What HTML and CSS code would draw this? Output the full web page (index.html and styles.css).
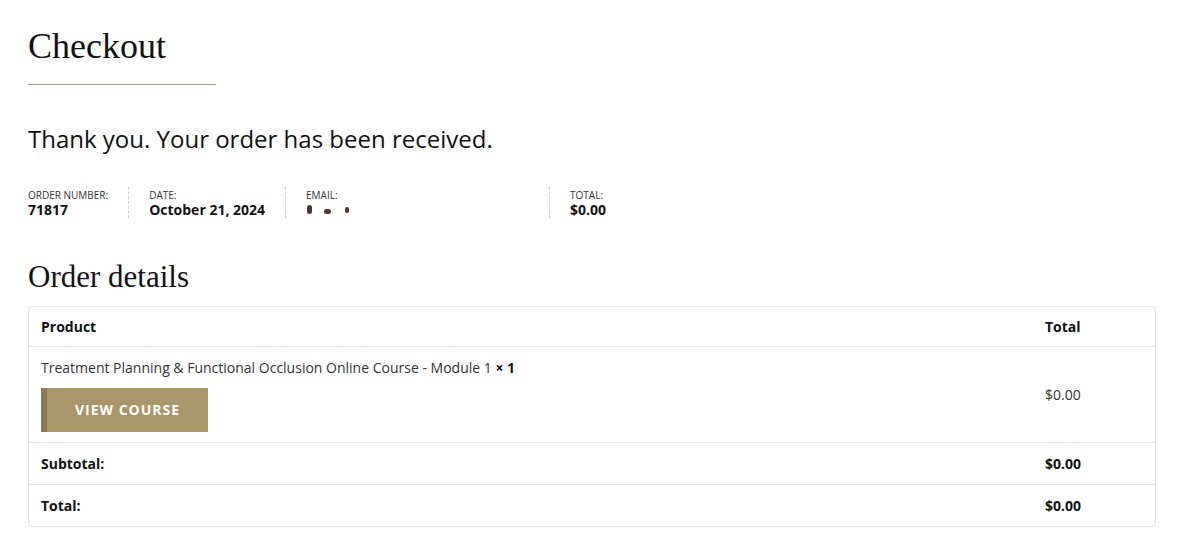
FILE: index.html
```html
<!DOCTYPE html>
<html lang="en">
<head>
<meta charset="utf-8">
<title>Checkout</title>
<link rel="stylesheet" href="styles.css">
</head>
<body>
<main class="page">
  <h1 class="page-title">Checkout</h1>
  <p class="thanks">Thank you. Your order has been received.</p>
  <ul class="overview">
    <li class="ov-item">
      <span class="ov-label">Order number:</span>
      <strong class="ov-value">71817</strong>
    </li>
    <li class="ov-item">
      <span class="ov-label">Date:</span>
      <strong class="ov-value">October 21, 2024</strong>
    </li>
    <li class="ov-item ov-email">
      <span class="ov-label">Email:</span>
      <span class="blurred"><i class="blob b1"></i><i class="blob b2"></i><i class="blob b3"></i></span>
    </li>
    <li class="ov-item ov-last">
      <span class="ov-label">Total:</span>
      <strong class="ov-value">$0.00</strong>
    </li>
  </ul>
  <h2 class="section-title">Order details</h2>
  <table class="order-table">
    <thead>
      <tr><th class="col-product">Product</th><th class="col-total">Total</th></tr>
    </thead>
    <tbody>
      <tr class="item-row">
        <td class="col-product">
          <div class="item-name">Treatment Planning &amp; Functional Occlusion Online Course - Module 1 <strong class="qty">× 1</strong></div>
          <a class="btn" href="#">View course</a>
        </td>
        <td class="col-total price">$0.00</td>
      </tr>
    </tbody>
    <tfoot>
      <tr><th class="col-product">Subtotal:</th><td class="col-total strong">$0.00</td></tr>
      <tr><th class="col-product">Total:</th><td class="col-total strong">$0.00</td></tr>
    </tfoot>
  </table>
</main>
</body>
</html>
```
FILE: styles.css
```css
* { box-sizing: border-box; }
html, body { margin: 0; padding: 0; background: #fff; }
body {
  font-family: "Open Sans", "Liberation Sans", sans-serif;
  color: #222;
}
.page { padding: 25px 29px 0 28px; }

.page-title {
  font-family: "Liberation Serif", "Times New Roman", serif;
  font-weight: 400;
  font-size: 36px;
  line-height: 43px;
  color: #111;
  margin: 0;
  padding-bottom: 16px;
  width: 188px;
  border-bottom: 1px solid #aa9c7a;
}

.thanks {
  font-size: 24px;
  line-height: 33px;
  margin: 37px 0 0;
  color: #111;
}

.overview {
  list-style: none;
  margin: 32px 0 0;
  padding: 0;
  display: flex;
}
.ov-item {
  display: flex;
  flex-direction: column;
  padding-right: 20px;
  margin-right: 20px;
  border-right: 1px dashed #d0d0d0;
  height: 31px;
}
.ov-last { border-right: none; }
.ov-email { width: 244px; }
.ov-label {
  font-size: 10px;
  line-height: 12px;
  text-transform: uppercase;
  color: #333;
  margin-top: 2px;
}
.ov-value {
  font-size: 14px;
  line-height: 17px;
  font-weight: 700;
  color: #111;
}
.blurred { display: flex; gap: 10px; align-items: center; height: 17px; padding-left: 1px; }
.blob { display: inline-block; background: #4a3a30; border-radius: 3px; filter: blur(0.6px); }
.b1 { width: 5px; height: 9px; }
.b2 { width: 7px; height: 5px; margin-left: 2px; margin-top: 3px; }
.b3 { width: 4px; height: 6px; margin-left: 4px; }

.section-title {
  font-family: "Liberation Serif", "Times New Roman", serif;
  font-weight: 400;
  font-size: 31px;
  line-height: 38px;
  color: #111;
  margin: 40px 0 10px;
}

.order-table {
  width: 100%;
  border: 1px solid #e4e4e4;
  border-radius: 4px;
  border-collapse: separate;
  border-spacing: 0;
  font-size: 14px;
  line-height: 19px;
}
.order-table th, .order-table td {
  text-align: left;
  padding: 10px 12px;
  border-top: 1px solid #e4e4e4;
  vertical-align: middle;
  color: #111;
}
.order-table thead th { border-top: none; font-weight: 700; }
.order-table tfoot th, .order-table tfoot td { padding: 11px 12px 11px; }
.order-table tfoot th { font-weight: 700; }
.order-table .col-total { width: 122px; }
.item-row td { color: #333; }
.item-row .col-product { vertical-align: top; padding-top: 11px; padding-bottom: 10px; }
.item-name { color: #333; }
.qty { color: #111; }
.price { color: #444; }
.strong { font-weight: 700; }

.btn {
  display: block;
  margin-top: 11px;
  width: 167px;
  height: 44px;
  line-height: 44px;
  background: #a8956a;
  border-left: 6px solid #8a7a56;
  color: #fff;
  font-weight: 700;
  font-size: 14px;
  letter-spacing: 1px;
  text-transform: uppercase;
  text-align: center;
  text-decoration: none;
}
```
